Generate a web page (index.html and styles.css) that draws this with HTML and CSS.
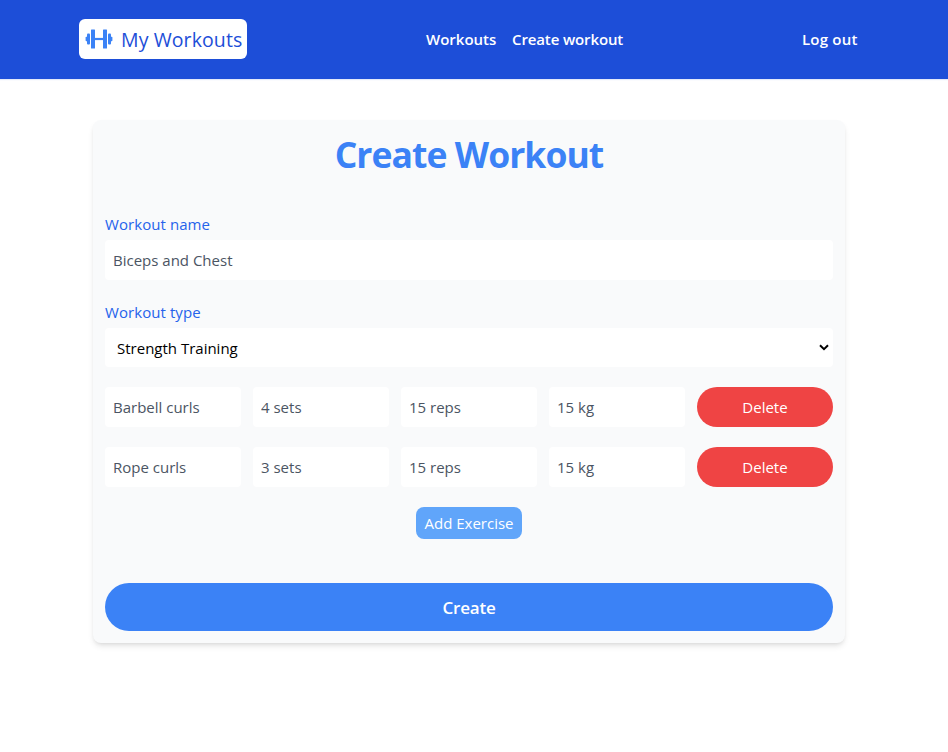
FILE: index.html
```html
<!DOCTYPE html>
<html lang="en">
<head>
<meta charset="utf-8">
<title>My Workouts</title>
<link rel="stylesheet" href="styles.css">
</head>
<body>
<header class="header">
  <a class="logo">
    <svg class="logo-icon" viewBox="0 0 28 20" width="28" height="20" fill="currentColor" aria-hidden="true">
      <rect x="6" y="0.5" width="4" height="19" rx="0.5"/>
      <rect x="18" y="0.5" width="4" height="19" rx="0.5"/>
      <rect x="9" y="8.9" width="10" height="2.2"/>
      <rect x="2" y="4.5" width="3" height="11" rx="1"/>
      <rect x="23" y="4.5" width="3" height="11" rx="1"/>
      <rect x="0.6" y="7.8" width="2" height="4.4" rx="0.8"/>
      <rect x="25.4" y="7.8" width="2" height="4.4" rx="0.8"/>
    </svg>
    <span class="logo-text">My Workouts</span>
  </a>
  <nav class="nav">
    <a class="nav-workouts">Workouts</a>
    <a class="nav-create">Create workout</a>
  </nav>
  <a class="logout">Log out</a>
</header>
<main>
  <form class="card">
    <h1>Create Workout</h1>
    <label for="name">Workout name</label>
    <input id="name" class="name" value="Biceps and Chest">
    <label for="type">Workout type</label>
    <div class="select-wrap">
      <select id="type"><option>Strength Training</option></select>
      <svg class="chevron" viewBox="0 0 10 7" width="10" height="7" aria-hidden="true"><path d="M1 1.2 5 5.1 9 1.2"/></svg>
    </div>
    <div class="exercise">
      <input value="Barbell curls"><input value="4 sets"><input value="15 reps"><input value="15 kg">
      <button type="button" class="delete">Delete</button>
    </div>
    <div class="exercise">
      <input value="Rope curls"><input value="3 sets"><input value="15 reps"><input value="15 kg">
      <button type="button" class="delete">Delete</button>
    </div>
    <button type="button" class="add">Add Exercise</button>
    <button type="button" class="create">Create</button>
  </form>
</main>
</body>
</html>
```
FILE: styles.css
```css
* { box-sizing: border-box; }
body {
  margin: 0;
  min-height: 100vh;
  background: #fff;
  font-family: "Segoe UI", "Open Sans", "Noto Sans", sans-serif;
  font-size: 15px;
  line-height: 24px;
}
input, select, button { font: inherit; letter-spacing: inherit; border: 0; margin: 0; outline: 0; }
main { padding-bottom: 40px; }
.header {
  height: 79px;
  padding: 0 89px 1px 79px;
  display: flex;
  align-items: center;
  justify-content: space-between;
  background: #1d4ed8;
  color: #fff;
  font-weight: 600;
  box-shadow: 0 1px 1px rgba(29, 78, 216, .12);
}
.logo {
  width: 168px;
  height: 40px;
  padding-left: 6px;
  display: flex;
  align-items: center;
  gap: 8px;
  border-radius: 6px;
  background: #fff;
  color: #1d4ed8;
  font-size: 19.5px;
  font-weight: 500;
  letter-spacing: 0.1px;
  white-space: nowrap;
}
.logo-text { padding-top: 2px; }
.logo-icon { color: #3b82f6; flex: none; }
.nav { display: flex; gap: 16px; }
.nav-workouts { width: 71px; white-space: nowrap; }
.nav-create { width: 111px; white-space: nowrap; letter-spacing: -0.12px; margin-left: -1px; }
.logout { width: 57px; white-space: nowrap; letter-spacing: 0.2px; }
.card {
  width: 752px;
  height: 523px;
  margin: 41px 0 0 93px;
  padding: 12px;
  display: flex;
  flex-direction: column;
  border-radius: 8px;
  background: #f9fafb;
  box-shadow: 0 4px 6px -1px rgba(0, 0, 0, .1), 0 2px 4px -2px rgba(0, 0, 0, .1);
}
h1 {
  margin: 2px 0 40px;
  text-align: center;
  color: #3b82f6;
  font-size: 35.5px;
  font-weight: 700;
  letter-spacing: -0.95px;
  line-height: 40px;
}
label { height: 24px; margin-bottom: 2px; color: #2563eb; letter-spacing: 0.07px; }
h1 + label { margin-top: -2px; }
input {
  width: 100%;
  height: 40px;
  min-width: 0;
  padding: 8px;
  border-radius: 4px;
  background: #fff;
  color: #4b5563;
}
.name { margin: 2px 0 20px; }
.select-wrap { position: relative; margin: 2px 0 20px; height: 39px; }
select {
  display: block;
  width: 100%;
  height: 39px;
  padding: 1px 12px 0;
  appearance: none;
  border-radius: 4px;
  background: #fff;
  color: #000;
}
.chevron { position: absolute; right: 4px; top: 16px; fill: none; stroke: #000; stroke-width: 2; }
.exercise {
  display: grid;
  grid-template-columns: repeat(5, 1fr);
  gap: 12px;
  margin-bottom: 20px;
}
.delete { height: 40px; padding: 0; border-radius: 20px; background: #ef4444; color: #fff; }
.add {
  width: 106px;
  height: 32px;
  padding: 0;
  align-self: center;
  border-radius: 8px;
  background: #60a5fa;
  color: #fff;
}
.create {
  height: 48px;
  margin-top: 44px;
  padding-top: 2px;
  border-radius: 24px;
  background: #3b82f6;
  color: #fff;
  font-size: 17px;
  font-weight: 600;
  letter-spacing: -0.2px;
}
```
